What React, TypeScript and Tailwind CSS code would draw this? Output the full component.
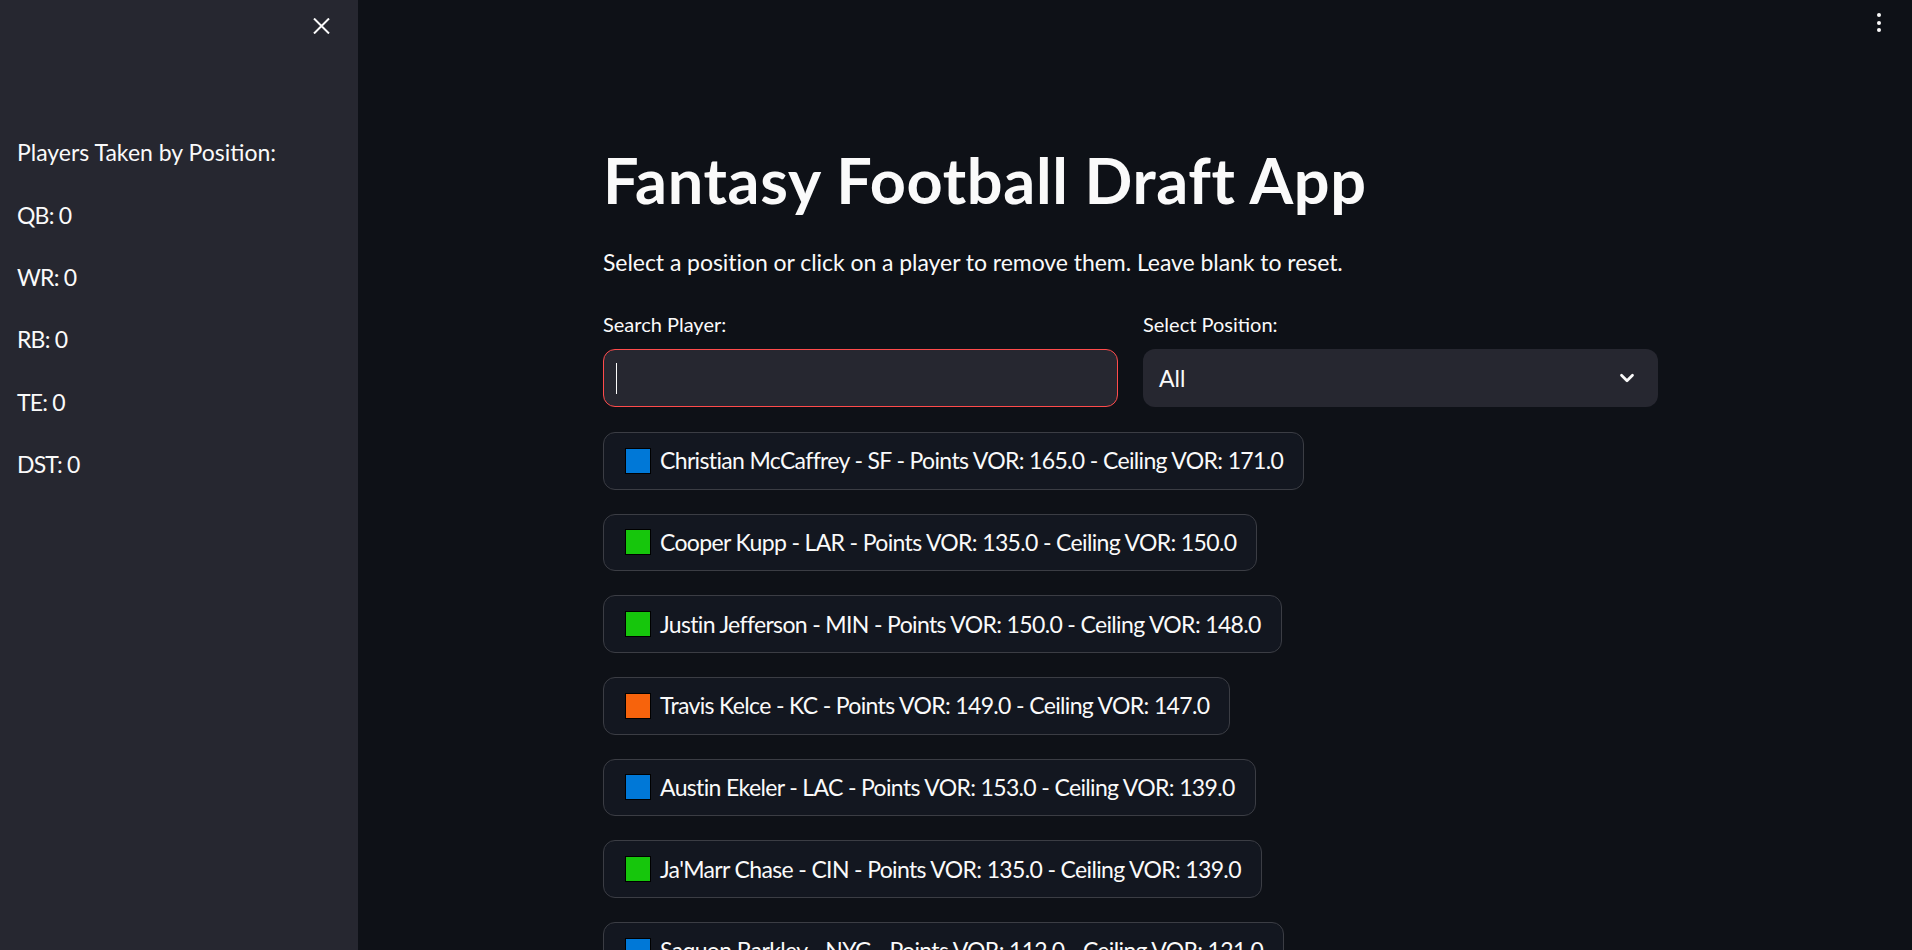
import { ChevronDown } from 'lucide-react';

type Pick = { name: string; team: string; pts: string; ceil: string; pos: 'RB' | 'WR' | 'TE' };

const picks: Pick[] = [
  { name: 'Christian McCaffrey', team: 'SF', pts: '165.0', ceil: '171.0', pos: 'RB' },
  { name: 'Cooper Kupp', team: 'LAR', pts: '135.0', ceil: '150.0', pos: 'WR' },
  { name: 'Justin Jefferson', team: 'MIN', pts: '150.0', ceil: '148.0', pos: 'WR' },
  { name: 'Travis Kelce', team: 'KC', pts: '149.0', ceil: '147.0', pos: 'TE' },
  { name: 'Austin Ekeler', team: 'LAC', pts: '153.0', ceil: '139.0', pos: 'RB' },
  { name: "Ja'Marr Chase", team: 'CIN', pts: '135.0', ceil: '139.0', pos: 'WR' },
  { name: 'Saquon Barkley', team: 'NYG', pts: '112.0', ceil: '121.0', pos: 'RB' },
  { name: 'Tyreek Hill', team: 'MIA', pts: '128.0', ceil: '119.0', pos: 'WR' },
];

const swatch = {
  RB: 'bg-[#0078d7]',
  WR: 'bg-[#16c60c]',
  TE: 'bg-[#f7630c]',
};

const counts = ['QB', 'WR', 'RB', 'TE', 'DST'];

export default function App() {
  return (
    <div className="flex h-[950px] w-full overflow-hidden bg-[#0e1117] text-[#fafafa] font-['Lato','Noto_Sans',sans-serif]">
      {/* sidebar */}
      <aside className="relative w-[358px] shrink-0 bg-[#262730] pl-[17px] pt-[141px]">
        <button className="absolute left-[313px] top-[18px] text-[#fafafa]">
          <svg width="17" height="16" viewBox="0 0 17 16" fill="none" stroke="currentColor" strokeWidth="2">
            <path d="M1 0.5 L16 15.5 M16 0.5 L1 15.5" />
          </svg>
        </button>
        <p className="text-[23px] leading-[23px]">Players Taken by Position:</p>
        <div className="mt-[39.5px] flex flex-col gap-[39.4px]">
          {counts.map((c) => (
            <p key={c} className="text-[23px] leading-[23px] tracking-[-0.8px]">
              {c}: 0
            </p>
          ))}
        </div>
      </aside>

      {/* main */}
      <main className="relative flex-1 pl-[245px] pt-[149px]">
        <div className="absolute right-[31px] top-[13px] flex flex-col gap-[3.5px]">
          <span className="h-[4px] w-[4px] rounded-full bg-[#fafafa]" />
          <span className="h-[4px] w-[4px] rounded-full bg-[#fafafa]" />
          <span className="h-[4px] w-[4px] rounded-full bg-[#fafafa]" />
        </div>

        <div className="flex w-[1055px] flex-col">
          <h1 className="text-[63px] font-bold leading-[62px] tracking-[0.66px]">Fantasy Football Draft App</h1>
          <p className="mt-[40px] text-[23px] leading-[23px] tracking-[-0.05px]">
            Select a position or click on a player to remove them. Leave blank to reset.
          </p>

          <div className="mt-[40px] grid grid-cols-2 gap-[25px]">
            <div className="flex flex-col">
              <label className="text-[20px] leading-[20px]">Search Player:</label>
              <div className="mt-[15px] flex h-[58px] items-center rounded-[12px] border border-[#ff4b4b] bg-[#262730] pl-[12px]">
                <span className="h-[31px] w-[1px] bg-[#fafafa]" />
              </div>
            </div>
            <div className="flex flex-col">
              <label className="text-[20px] leading-[20px]">Select Position:</label>
              <div className="mt-[15px] flex h-[58px] items-center justify-between rounded-[12px] bg-[#262730] pl-[16px] pr-[20px]">
                <span className="text-[23px] leading-[23px]">All</span>
                <ChevronDown className="h-[22px] w-[22px]" strokeWidth={3} />
              </div>
            </div>
          </div>

          <div className="mt-[25px] flex flex-col items-start gap-[24px]">
            {picks.map((p) => (
              <button
                key={p.name}
                className="flex h-[57.67px] items-center gap-[9px] rounded-[12px] border border-[#3b3d44] bg-[#131720] pl-[21px] pr-[20px] text-[23px] leading-[23px] tracking-[-0.65px]"
              >
                <span className={`h-[26px] w-[26px] border-[1.5px] border-black ${swatch[p.pos]}`} />
                <span>
                  {p.name} - {p.team} - Points VOR: {p.pts} - Ceiling VOR: {p.ceil}
                </span>
              </button>
            ))}
          </div>
        </div>
      </main>
    </div>
  );
}
